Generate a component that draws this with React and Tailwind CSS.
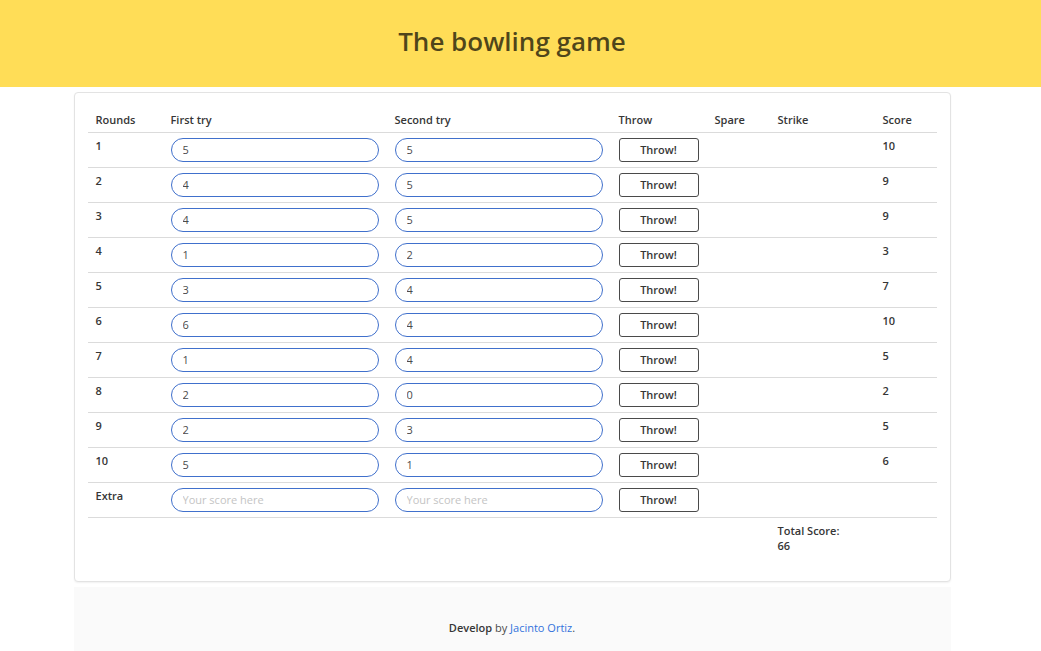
import React from 'react';

const rounds = [
  { label: '1', first: '5', second: '5', score: '10' },
  { label: '2', first: '4', second: '5', score: '9' },
  { label: '3', first: '4', second: '5', score: '9' },
  { label: '4', first: '1', second: '2', score: '3' },
  { label: '5', first: '3', second: '4', score: '7' },
  { label: '6', first: '6', second: '4', score: '10' },
  { label: '7', first: '1', second: '4', score: '5' },
  { label: '8', first: '2', second: '0', score: '2' },
  { label: '9', first: '2', second: '3', score: '5' },
  { label: '10', first: '5', second: '1', score: '6' },
  { label: 'Extra', first: '', second: '', score: '' },
];

const ScoreInput = ({ value }) => (
  <input
    type="text"
    defaultValue={value}
    placeholder="Your score here"
    className="h-[24px] w-[208px] rounded-full border border-[#4070cc] bg-white px-[11px] text-[11px] text-[#4a4a4a] outline-none placeholder:text-[#c4c4c4]"
  />
);

const App = () => {
  return (
    <div className="min-h-[651px] w-full bg-white font-['Open_Sans','Noto_Sans',sans-serif] text-[11px] text-[#363636]">
      <header className="h-[87px] bg-[#ffdd57]">
        <div className="flex h-full w-[1024px] items-center justify-center pb-[6px]">
          <h1 className="text-[26px] font-semibold leading-none text-black/70">The bowling game</h1>
        </div>
      </header>

      <div className="w-[1024px]">
        <main className="mx-auto mt-[5px] w-[877px] rounded-[4px] border border-[#e3e3e3] bg-white px-[13px] pb-[28px] pt-[14px] shadow-[0_1px_2px_rgba(0,0,0,0.06)]">
          <table className="w-[849px] table-fixed border-collapse">
            <colgroup>
              <col className="w-[75px]" />
              <col className="w-[224px]" />
              <col className="w-[224px]" />
              <col className="w-[96px]" />
              <col className="w-[63px]" />
              <col className="w-[105px]" />
              <col className="w-[62px]" />
            </colgroup>
            <thead>
              <tr className="border-b border-[#dbdbdb]">
                {['Rounds', 'First try', 'Second try', 'Throw', 'Spare', 'Strike', 'Score'].map((h) => (
                  <th key={h} className="h-[25px] px-[8px] pt-[2px] text-left align-middle font-semibold">
                    {h}
                  </th>
                ))}
              </tr>
            </thead>
            <tbody>
              {rounds.map((r) => (
                <tr key={r.label} className="h-[35px] border-b border-[#dbdbdb]">
                  <td className="px-[8px] pt-[5px] align-top font-semibold">{r.label}</td>
                  <td className="p-0 pl-[8px] align-middle">
                    <ScoreInput value={r.first} />
                  </td>
                  <td className="p-0 pl-[8px] align-middle">
                    <ScoreInput value={r.second} />
                  </td>
                  <td className="p-0 pl-[8px] align-middle">
                    <button className="h-[24px] w-[80px] rounded-[3px] border border-[#4a4a4a] bg-white pt-[1px] font-semibold text-[#363636]">
                      Throw!
                    </button>
                  </td>
                  <td />
                  <td />
                  <td className="px-[8px] pt-[5px] align-top font-semibold">{r.score}</td>
                </tr>
              ))}
              <tr>
                <td colSpan={5} />
                <td className="px-[8px] pt-[5px] align-top font-semibold leading-[15px]">
                  Total Score:
                  <br />
                  66
                </td>
                <td />
              </tr>
            </tbody>
          </table>
        </main>

        <footer className="mx-auto mt-[5px] w-[877px] bg-[#fafafa] pb-[40px] pt-[33px] text-center text-[11px] text-[#4a4a4a]">
          <strong className="font-semibold text-[#363636]">Develop</strong> by{' '}
          <a href="#" className="text-[#3273dc]">
            Jacinto Ortiz
          </a>
          .
        </footer>
      </div>
    </div>
  );
};

export default App;
